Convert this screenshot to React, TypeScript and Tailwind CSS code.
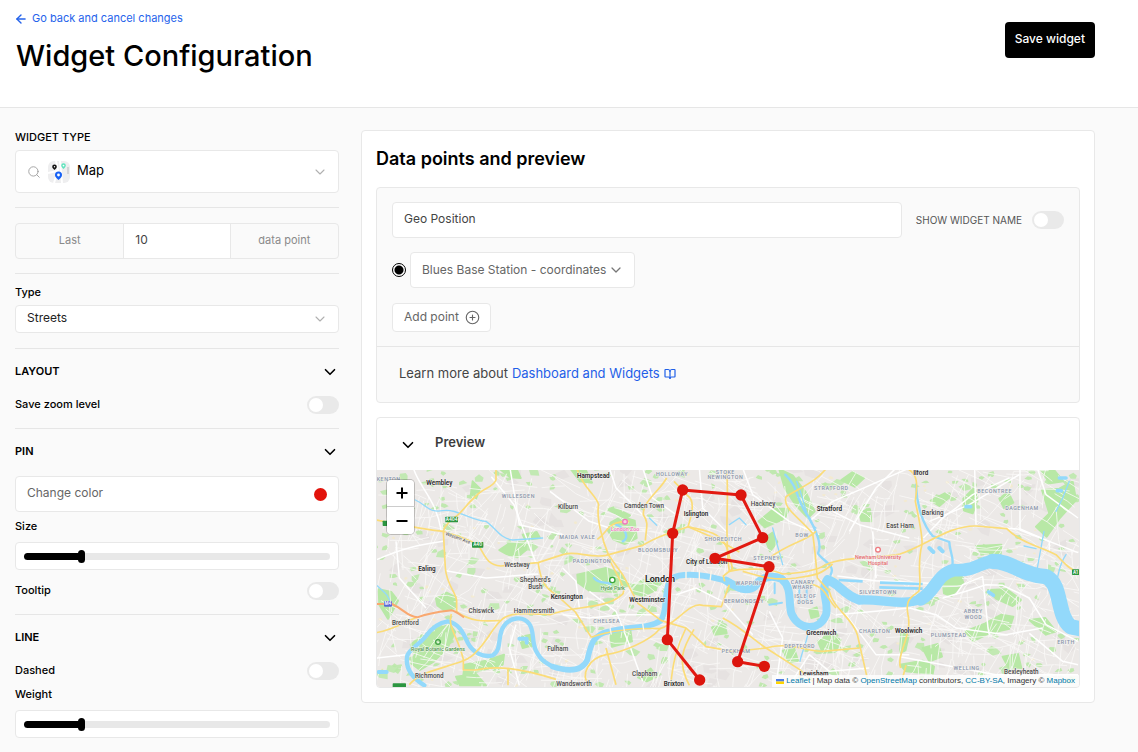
import { useId } from "react";
import type { ReactNode } from "react";
import { ArrowLeft, BookOpen, ChevronDown, CirclePlus, Search } from "lucide-react";

type Label = [x: number, y: number, text: string, kind: "town" | "minor" | "area" | "city" | "poi"];

const LABELS: Label[] = [
  [190, 52, "Wembley", "town"],
  [38, 38, "KENTON", "area"],
  [427, 91, "WILLESDEN", "area"],
  [153, 308, "Ealing", "town"],
  [423, 296, "Westway", "minor"],
  [478, 342, "Shepherd's", "minor"],
  [478, 362, "Bush", "minor"],
  [316, 435, "Chiswick", "minor"],
  [474, 436, "Hammersmith", "minor"],
  [88, 472, "Brentford", "minor"],
  [186, 550, "Royal Botanic Gardens", "poi"],
  [160, 630, "Richmond", "minor"],
  [652, 30, "Hampstead", "town"],
  [576, 122, "Kilburn", "minor"],
  [804, 120, "Camden Town", "minor"],
  [888, 24, "HOLLOWAY", "area"],
  [1048, 19, "STOKE", "area"],
  [1048, 34, "NEWINGTON", "area"],
  [960, 145, "Islington", "town"],
  [604, 212, "MAIDA VALE", "area"],
  [846, 252, "BLOOMSBURY", "area"],
  [648, 284, "PADDINGTON", "area"],
  [1042, 218, "SHOREDITCH", "area"],
  [992, 289, "City of London", "town"],
  [852, 342, "London", "city"],
  [710, 365, "Hyde Park", "poi"],
  [572, 393, "Kensington", "town"],
  [814, 403, "Westminster", "town"],
  [692, 464, "CHELSEA", "area"],
  [545, 548, "Fulham", "minor"],
  [806, 624, "Clapham", "minor"],
  [594, 653, "Wandsworth", "minor"],
  [894, 653, "Brixton", "town"],
  [1161, 114, "Hackney", "minor"],
  [1366, 66, "STRATFORD", "area"],
  [1360, 130, "Stratford", "town"],
  [1278, 207, "BOW", "area"],
  [1572, 179, "East Ham", "minor"],
  [1172, 277, "STEPNEY", "area"],
  [1120, 352, "WAPPING", "area"],
  [1280, 347, "CANARY", "area"],
  [1280, 364, "WHARF", "area"],
  [1288, 391, "ISLE OF", "area"],
  [1288, 409, "DOGS", "area"],
  [1104, 404, "BERMONDSEY", "area"],
  [1506, 377, "SILVERTOWN", "area"],
  [1496, 495, "CHARLTON", "area"],
  [1336, 500, "Greenwich", "town"],
  [1271, 539, "DEPTFORD", "area"],
  [1080, 554, "PECKHAM", "area"],
  [1314, 624, "Lewisham", "town"],
  [1598, 496, "Woolwich", "town"],
  [1634, 22, "Ilford", "town"],
  [1670, 141, "Barking", "minor"],
  [1856, 75, "BECONTREE", "area"],
  [1938, 125, "DAGENHAM", "area"],
  [1792, 436, "ABBEY", "area"],
  [1792, 454, "WOOD", "area"],
  [1718, 508, "PLUMSTEAD", "area"],
  [1772, 606, "WELLING", "area"],
  [1936, 617, "Bexleyheath", "minor"],
  [2070, 528, "ERITH", "area"],
];

const LABEL_CLASS = {
  town: "fill-[#2b2b2b] text-[19px] font-semibold",
  minor: "fill-[#4b4b4b] text-[19px] font-medium",
  area: "fill-[#8792a8] text-[16px] font-medium tracking-widest",
  city: "fill-[#1f1f1f] text-[27px] font-semibold",
  poi: "fill-[#4f9a4c] text-[16px] font-medium",
};

const PARKS = [
  "M290 40 L312 62 L300 92 L284 84 Z",
  "M368 0 L420 0 L434 30 L402 28 Z",
  "M370 246 L400 226 L452 222 L450 246 L424 268 L392 258 Z",
  "M440 200 L482 192 L492 210 L448 216 Z",
  "M180 392 L212 374 L240 388 L238 420 L206 428 L184 412 Z",
  "M8 364 L46 372 L66 398 L50 428 L36 452 L10 410 Z",
  "M126 534 L176 484 L222 470 L238 492 L214 540 L174 580 L132 606 L106 586 Z",
  "M104 530 L140 500 L150 512 L112 552 Z",
  "M266 590 L330 578 L384 560 L380 590 L320 606 L262 622 Z",
  "M240 626 L300 618 L330 652 L252 652 Z",
  "M430 508 L464 500 L470 532 L440 540 Z",
  "M604 320 L690 300 L734 318 L758 350 L720 372 L640 368 L606 344 Z",
  "M704 164 L736 146 L776 158 L782 210 L746 228 L712 214 L696 188 Z",
  "M700 490 L762 480 L768 520 L708 536 Z",
  "M768 352 L800 338 L846 334 L840 366 L800 384 L774 376 Z",
  "M582 0 L626 0 L648 44 L612 40 Z",
  "M694 124 L712 118 L762 142 L748 152 Z",
  "M786 628 L824 602 L842 626 L812 640 Z",
  "M1008 478 L1046 470 L1052 496 L1016 500 Z",
  "M1210 4 L1250 22 L1290 74 L1316 130 L1296 150 L1258 110 L1226 60 Z",
  "M1148 160 L1194 122 L1240 122 L1226 152 L1166 178 Z",
  "M1166 210 L1190 194 L1204 222 L1182 250 Z",
  "M1300 426 L1322 418 L1328 444 L1306 450 Z",
  "M1326 520 L1360 500 L1394 516 L1378 552 L1340 554 Z",
  "M1220 548 L1254 540 L1266 578 L1240 584 Z",
  "M1396 36 L1430 12 L1464 30 L1436 56 Z",
  "M1450 132 L1482 124 L1486 160 L1456 158 Z",
  "M1762 92 L1796 58 L1804 100 L1790 136 L1764 128 Z",
  "M1664 98 L1706 76 L1722 86 L1690 114 Z",
  "M1870 92 L1896 72 L1912 104 L1884 120 Z",
  "M1990 0 L2034 6 L2062 40 L2022 46 Z",
  "M1998 66 L2050 62 L2090 40 L2100 96 L2050 152 L2012 206 L1980 176 L2020 136 Z",
  "M1700 340 L1752 318 L1762 344 L1726 384 L1704 376 Z",
  "M1836 366 L1892 364 L1936 396 L1910 414 L1860 392 Z",
  "M1800 234 L1876 230 L1874 258 L1816 256 Z",
  "M1768 490 L1828 466 L1876 440 L1912 446 L1900 482 L1840 496 L1790 520 Z",
  "M1960 456 L2008 450 L2040 490 L2010 500 Z",
  "M1640 540 L1686 528 L1698 566 L1660 580 Z",
  "M1576 488 L1598 504 L1588 548 L1572 554 Z",
  "M1572 590 L1640 578 L1674 596 L1670 618 L1590 610 Z",
  "M1880 566 L1926 558 L1936 600 L1896 596 Z",
];

const ROADS = [
  "M360 0 V36 C350 60 320 60 300 84 C270 110 260 130 244 142 C220 160 206 172 202 190 L208 300 C212 350 238 370 242 398 V432",
  "M0 156 C60 166 110 180 202 190 C240 204 288 214 310 236 C330 270 336 290 374 294 L486 284 L560 260 C600 246 640 272 690 262 L800 232 C860 196 900 190 936 176",
  "M486 284 C494 330 500 356 540 380 L598 432 L646 508",
  "M242 432 C300 470 346 456 374 458 C400 430 450 436 522 440 C600 412 690 424 738 380 C756 366 720 320 698 270",
  "M0 494 C50 486 84 462 124 448",
  "M226 438 C214 480 244 500 262 574 V606 H300 C360 592 430 600 540 634",
  "M100 650 C150 592 262 600 300 552 C330 524 350 480 374 458",
  "M396 600 V652",
  "M602 0 C620 60 660 80 668 110 C660 150 680 220 698 262 L740 320 L786 406 L856 458 L930 480 L990 536 L1070 550",
  "M664 214 C700 190 690 160 760 160",
  "M872 30 C850 70 800 100 802 140 C820 166 810 180 808 218",
  "M894 40 L936 84 C960 100 944 150 936 176 L1020 212 L1090 252",
  "M936 176 C990 190 1040 190 1056 250 L1070 302 L1042 324 L1046 340",
  "M646 508 C700 486 790 480 852 482 C820 520 740 552 690 560 C640 570 610 620 640 652",
  "M690 540 L720 650",
  "M930 480 C900 540 890 590 884 652",
  "M954 484 C920 540 902 580 940 652",
  "M852 482 C900 470 940 400 980 412 L1036 416 L1060 350",
  "M1052 6 C1060 100 1044 200 1060 310 C1100 300 1180 300 1220 318 C1260 316 1320 310 1350 290 C1400 266 1500 272 1572 258 C1650 232 1720 172 1800 174 L1892 182 C1930 220 1980 232 2040 260 C2060 280 2080 306 2106 312",
  "M1100 310 C1140 320 1180 340 1260 330 C1320 320 1330 322 1370 288",
  "M1180 270 C1240 224 1290 220 1320 190",
  "M1352 0 C1320 40 1290 50 1230 86 C1220 120 1260 140 1310 196 C1316 240 1320 280 1324 330 L1360 370 C1370 420 1430 450 1444 500 L1476 640",
  "M1290 346 C1350 350 1350 390 1380 420",
  "M1040 450 C1100 480 1150 530 1170 540 C1240 520 1290 550 1340 550 L1450 540",
  "M1060 552 L1170 540 L1270 604 L1310 640",
  "M1590 0 C1632 18 1622 60 1618 100 C1630 160 1640 200 1638 230 C1620 300 1640 340 1628 370 C1600 390 1588 400 1596 440 C1610 500 1560 560 1574 600",
  "M1590 592 L1574 652",
];

const MAJOR_STREETS = [
  "M112 0 C130 60 180 90 196 190",
  "M0 276 C80 240 130 230 202 220",
  "M210 308 L330 330 L486 318",
  "M346 26 L414 110 L480 286",
  "M402 0 L430 170 L560 200",
  "M0 570 L90 560",
  "M60 220 L70 330 L150 420",
  "M522 70 L640 160 L700 180",
  "M700 0 L720 60 L800 140",
  "M800 0 L830 90 L900 140",
  "M970 0 L980 120 L1050 190",
  "M560 440 L640 450 L740 440 L850 440",
  "M900 380 L960 360 L1040 400 L1130 500",
  "M1100 0 L1130 80 L1240 160 L1330 200",
  "M1300 160 L1370 100 L1440 70 L1600 0",
  "M1370 130 L1450 170 L1600 210",
  "M1420 190 L1500 60 L1560 0",
  "M1490 190 L1500 330",
  "M1384 324 L1500 338 L1660 346",
  "M1642 210 L1700 150 L1740 120 L1790 80 L1900 30",
  "M1660 160 L1780 110 L1930 20",
  "M1932 0 V186 L2106 254",
  "M1984 0 L2010 80 L2106 150",
  "M1796 0 L1800 170",
  "M1876 180 L1936 184 L2020 220 L2020 250",
  "M1700 390 L1770 370 L1830 350 L1880 352 L1960 390 L2010 470 L2106 520",
  "M1740 380 L1760 350 L1820 326 L1836 480 L1840 500",
  "M1600 420 L1680 440 L1740 480 L1890 500 L2000 480",
  "M1572 566 L1700 590 L1860 620 L2106 620",
  "M1960 496 L2060 580 L2106 590",
  "M1380 440 L1500 430 L1600 420",
  "M1410 440 L1500 560 L1600 560",
  "M1180 430 L1220 510 L1200 652",
  "M1240 652 L1300 560 L1360 610 L1480 600",
  "M560 300 L600 340 L610 420",
  "M640 370 L720 430 L760 530 L800 640",
  "M420 470 L400 540 L430 652",
];

const MARKERS = [
  [971, 636],
  [874, 515],
  [890, 196],
  [920, 66],
  [1095, 81],
  [1160, 209],
  [1017, 271],
  [1179, 296],
  [1085, 581],
  [1165, 595],
];

function createRandom(seed: number) {
  let s = seed;
  return () => {
    s = (s * 16807) % 2147483647;
    return s / 2147483647;
  };
}

const random = createRandom(4711);

const STREETS = Array.from({ length: 900 }, () => {
  const x = random() * 2110;
  const y = random() * 655;
  const a = (random() < 0.5 ? 0.35 : 1.9) + (random() - 0.5) * 0.9;
  const l = 24 + random() * 80;
  const b = a + (random() - 0.5) * 0.7;
  const x2 = x + Math.cos(a) * l;
  const y2 = y + Math.sin(a) * l;
  return `M${x.toFixed(0)} ${y.toFixed(0)}L${x2.toFixed(0)} ${y2.toFixed(0)}L${(x2 + Math.cos(b) * l * 0.6).toFixed(0)} ${(y2 + Math.sin(b) * l * 0.6).toFixed(0)}`;
}).join("");

function patches(count: number, size: number) {
  return Array.from({ length: count }, () => {
    const x = random() * 2110;
    const y = random() * 655;
    const sides = 5;
    const tilt = random() * 6;
    const points = Array.from({ length: sides }, (_, i) => {
      const r = size * (0.4 + random() * 0.9);
      const t = tilt + (i / sides) * Math.PI * 2;
      return `${(x + Math.cos(t) * r * 1.2).toFixed(0)} ${(y + Math.sin(t) * r * 0.8).toFixed(0)}`;
    });
    return `M${points.join("L")}Z`;
  }).join("");
}

const SMALL_GREENS = patches(330, 10);
const MEDIUM_GREENS = patches(70, 17);
const BUILT_UP = patches(130, 22);
const YELLOW_BLOCKS = patches(90, 6);

function CityMap() {
  return (
    <svg viewBox="3 6 2106 651" className="block w-full" role="img" aria-label="Map of London">
      <rect x="0" y="0" width="2112" height="660" fill="#ece9e7" />
      <path d={BUILT_UP} fill="#e6e2e1" />
      <path d={YELLOW_BLOCKS} fill="#f3ead0" />
      <g fill="#b8e8a6">
        <path d={SMALL_GREENS} opacity="0.85" />
        <path d={MEDIUM_GREENS} opacity="0.8" />
        {PARKS.map((d) => (
          <path key={d} d={d} stroke="#b8e8a6" strokeWidth="6" strokeLinejoin="round" />
        ))}
      </g>
      <path d={STREETS} fill="none" stroke="#faf9f8" strokeWidth="2.4" />
      <g fill="none" stroke="#ffffff" strokeWidth="4.5" strokeLinejoin="round">
        {MAJOR_STREETS.map((d) => (
          <path key={d} d={d} />
        ))}
      </g>
      <g fill="none" stroke="#93d9fb" strokeLinecap="round" strokeLinejoin="round">
        <g strokeWidth="4">
          <path d="M118 96 C150 110 160 136 200 128 C240 120 290 160 330 160 C360 180 370 210 410 216 L500 210" />
          <path d="M0 350 C20 370 40 380 44 410" />
          <path d="M720 170 C750 180 760 210 740 220" strokeWidth="7" />
          <path d="M654 330 C670 350 690 340 704 348" strokeWidth="7" />
          <path d="M820 150 L842 172 M1060 170 L1090 150 L1110 170 M1190 180 L1220 290" />
          <path d="M1228 20 C1270 60 1260 100 1300 150 C1320 190 1340 230 1326 256 C1340 280 1380 290 1364 320" strokeWidth="7" />
          <path d="M1262 40 C1290 110 1290 160 1320 180" />
          <path d="M1620 50 C1622 110 1640 170 1670 204 L1720 222 C1720 250 1736 270 1728 296" strokeWidth="7" />
          <path d="M1944 234 L1980 242 M2080 40 L2060 90 L2040 130 M2004 190 L1984 300 M2070 260 C2050 290 2050 310 2044 330" />
          <path d="M1272 580 C1280 540 1300 510 1296 480" />
        </g>
        <path
          d="M145 652 C110 630 86 600 94 562 C104 540 130 530 150 504 C170 476 190 464 215 460 C250 466 262 496 276 526 C290 552 320 570 350 562 C380 545 362 500 384 474 C400 450 440 440 460 468 C476 490 466 520 480 548 C496 580 516 590 540 600"
          strokeWidth="13"
        />
        <path
          d="M530 596 C580 612 618 610 634 576 C644 530 650 500 700 490 C760 474 820 482 854 458 C876 430 862 360 884 332 C920 312 990 320 1062 342"
          strokeWidth="17"
        />
        <path
          d="M1050 338 C1080 356 1110 376 1138 354 C1156 324 1190 322 1216 332 C1250 360 1236 400 1246 436 C1270 490 1330 490 1350 440 C1360 400 1330 370 1354 334"
          strokeWidth="24"
        />
        <path d="M1356 336 C1390 346 1400 380 1450 396 C1520 392 1580 416 1640 392" strokeWidth="28" />
        <path d="M1634 394 C1680 370 1680 320 1734 306 C1800 312 1820 274 1870 278" strokeWidth="38" />
        <path d="M1850 280 C1910 280 1930 320 2010 326 C2060 350 2040 440 2084 476 L2130 486" strokeWidth="46" />
        <path d="M1388 336 L1460 340 M1512 344 L1640 348 M1510 358 L1640 362" strokeWidth="8" strokeLinecap="butt" />
        <path d="M1180 410 L1218 404 M1270 340 V400 M1292 344 V400 M1196 346 V376" strokeWidth="6" />
        <path d="M1660 240 L1672 252 M1690 240 L1700 250 M430 512 H452 V524 M8 612 H32" strokeWidth="12" />
        <path d="M2050 30 H2070 M2044 68 H2056 M1770 116 H1784 M1838 372 L1852 382" strokeWidth="11" />
      </g>
      <g fill="none" stroke="#fbdc78" strokeWidth="5" strokeLinejoin="round">
        {ROADS.map((d) => (
          <path key={d} d={d} />
        ))}
      </g>
      <path
        d="M0 408 H48 C84 424 94 446 124 448 C160 434 200 430 226 427 C240 430 252 440 264 448"
        fill="none"
        stroke="#f9a870"
        strokeWidth="6"
      />
      <g stroke="#fbf6ea" strokeWidth="4">
        <path d="M930 310 V334 M970 306 V334 M1006 308 L1002 340 M702 480 L706 500 M742 472 L746 494 M800 466 L804 492" />
      </g>
      <g fill="#2c9641">
        <rect x="208" y="146" width="38" height="17" rx="2" />
        <rect x="288" y="222" width="34" height="17" rx="2" />
        <rect x="20" y="158" width="24" height="16" rx="2" />
        <rect x="50" y="646" width="40" height="16" rx="2" />
        <rect x="2088" y="304" width="26" height="17" rx="2" />
      </g>
      <rect x="24" y="399" width="24" height="17" rx="3" fill="#5b69d6" />
      <g className="fill-white text-[13px] font-semibold" textAnchor="middle">
        <text x="227" y="159">A404</text>
        <text x="305" y="235">A40</text>
        <text x="36" y="412">M4</text>
        <text x="2098" y="317">A1</text>
      </g>
      <g fill="none" strokeWidth="4">
        <circle cx="186" cy="522" r="7" stroke="#43a047" />
        <circle cx="709" cy="336" r="8" stroke="#3aa63a" fill="#fff" />
        <circle cx="747" cy="161" r="7" stroke="#f078bb" fill="#fbd0e7" />
        <circle cx="1506" cy="245" r="7" stroke="#ee7a80" fill="#fff" />
      </g>
      <g
        className="font-['Roboto','Noto_Sans',sans-serif]"
        textAnchor="middle"
        stroke="#f4f2f0"
        strokeWidth="3"
        strokeLinejoin="round"
        paintOrder="stroke"
      >
        {LABELS.map(([x, y, text, kind]) => (
          <text key={text} x={x} y={y} className={LABEL_CLASS[kind]}>
            {text}
          </text>
        ))}
        <text transform="translate(244 214) rotate(20)" className="fill-[#4b4b4b] text-[14px]">
          Western Ave
        </text>
        <text x="747" y="189" className="fill-[#f078bb] text-[16px] font-medium">
          London Zoo
        </text>
        <g className="fill-[#e5696f] text-[16px] font-medium">
          <text x="1506" y="272">Newham University</text>
          <text x="1506" y="291">Hospital</text>
        </g>
      </g>
      <polyline
        points={MARKERS.map((p) => p.join(",")).join(" ")}
        fill="none"
        stroke="#e21a12"
        strokeWidth="9"
        strokeLinejoin="round"
      />
      {MARKERS.map(([x, y]) => (
        <circle key={`${x}-${y}`} cx={x} cy={y} r="17" fill="#dc150d" />
      ))}
    </svg>
  );
}

function MapThumb() {
  return (
    <svg viewBox="0 0 22 22" className="size-[22px]" aria-hidden="true">
      <rect width="22" height="22" rx="6" fill="#eeeeef" />
      <path d="M8 0 L10 9 L6 22 M12 0 L14 22 M0 12 L9 10" stroke="#fff" strokeWidth="2" fill="none" />
      <path d="M19 6 h2 v7 h-2 z" fill="#d4d4d6" />
      <path d="M6.500 9 C5 7.500 4.200 6.700 4.200 5.700 A2.300 2.300 0 0 1 8.800 5.700 C8.800 6.700 8 7.500 6.500 9 Z" fill="#111" />
      <circle cx="6.500" cy="5.700" r="0.700" fill="#fff" />
      <path d="M15.500 8 C14 6.500 13.200 5.700 13.200 4.600 A2.300 2.300 0 0 1 17.800 4.600 C17.800 5.700 17 6.500 15.500 8 Z" fill="#5fe3bd" />
      <circle cx="15.500" cy="4.600" r="0.900" fill="#fff" />
      <path d="M10.500 19 C8 16.800 7 15.700 7 14 A3.500 3.500 0 0 1 14 14 C14 15.700 13 16.800 10.500 19 Z" fill="#1560f5" />
      <circle cx="10.500" cy="14" r="1.400" fill="#fff" />
    </svg>
  );
}

function Toggle({ id }: { id: string }) {
  return (
    <input
      id={id}
      type="checkbox"
      role="switch"
      className="relative block h-[18px] w-8 shrink-0 appearance-none rounded-full bg-[#e9e9e9] before:absolute before:top-0.5 before:left-0.5 before:size-3.5 before:rounded-full before:bg-white checked:bg-black checked:before:left-4"
    />
  );
}

function ToggleRow({ label }: { label: string }) {
  const id = useId();
  return (
    <div className="flex h-[18px] items-center justify-between">
      <label htmlFor={id} className="pb-0.5 text-[11px] leading-[14px] font-medium">
        {label}
      </label>
      <Toggle id={id} />
    </div>
  );
}

function SliderField({ label }: { label: string }) {
  const id = useId();
  return (
    <div className="mt-[7px]">
      <label htmlFor={id} className="block text-[11px] leading-[14px] font-medium">
        {label}
      </label>
      <div className="mt-[9px] flex h-7 items-center rounded border border-[#e8e8e8] bg-white px-2">
        <input
          id={id}
          type="range"
          min={0}
          max={100}
          defaultValue={18}
          className="h-[7px] w-full appearance-none rounded-full bg-[linear-gradient(to_right,#000_19%,#e8e8e8_19%)] [&::-webkit-slider-thumb]:h-[13px] [&::-webkit-slider-thumb]:w-[7px] [&::-webkit-slider-thumb]:appearance-none [&::-webkit-slider-thumb]:rounded-full [&::-webkit-slider-thumb]:bg-black"
        />
      </div>
    </div>
  );
}

function Group({ title, children }: { title: string; children: ReactNode }) {
  return (
    <section className="border-t border-[#e6e6e6] pt-3 pb-3.5">
      <button type="button" className="mb-[15px] flex h-5 w-full items-center justify-between">
        <span className="text-[11px] font-semibold">{title}</span>
        <ChevronDown size={18} strokeWidth={2.2} className="mt-0.5 text-black" />
      </button>
      {children}
    </section>
  );
}

export default function App() {
  return (
    <div className="min-h-screen bg-[#fafafa] font-['Inter',sans-serif] text-black">
      <header className="flex h-[108px] items-start justify-between border-b border-[#e6e6e6] bg-white pr-[43px] pl-4">
        <div>
          <a href="#dashboard" className="mt-2.5 flex items-center gap-1 text-[11px] leading-[14px] text-[#2563eb]">
            <ArrowLeft size={14} strokeWidth={2.4} className="-ml-0.5 mt-0.5" />
            Go back and cancel changes
          </a>
          <h1 className="mt-2.5 text-[29px] leading-10 font-medium">Widget Configuration</h1>
        </div>
        <button type="button" className="mt-[22px] h-9 rounded bg-black px-2.5 pb-0.5 text-[12px] font-medium text-white">
          Save widget
        </button>
      </header>

      <div className="flex items-start gap-[22px] pt-[22px] pr-[43px] pb-3 pl-[15px]">
        <aside className="w-[324px] shrink-0">
          <label htmlFor="widget-type" className="block text-[11px] leading-[14px] font-medium">
            WIDGET TYPE
          </label>
          <div className="relative mt-1.5 mb-3.5">
            <select
              id="widget-type"
              className="block h-[43px] w-full appearance-none rounded border border-[#e8e8e8] bg-white pb-0.5 pl-[61px] text-[13px]"
            >
              <option>Map</option>
            </select>
            <span className="pointer-events-none absolute inset-y-0 left-3 flex items-center gap-[7px]">
              <Search size={14} strokeWidth={1.5} className="text-[#9a9a9a]" />
              <MapThumb />
            </span>
            <span className="pointer-events-none absolute inset-y-0 right-[11px] flex items-center">
              <ChevronDown size={16} strokeWidth={1.6} className="text-[#b0b0b0]" />
            </span>
          </div>

          <section className="border-t border-[#e6e6e6] pt-[15px] pb-3.5">
            <label className="grid h-9 grid-cols-3 overflow-hidden rounded border border-[#e8e8e8] text-center text-[11px] leading-8 text-[#8a8a8a]">
              <span>Last</span>
              <input
                type="text"
                defaultValue="10"
                className="min-w-0 border-x border-[#e8e8e8] bg-white px-[11px] pb-0.5 text-[12px] text-[#444]"
              />
              <span>data point</span>
            </label>
          </section>

          <section className="border-t border-[#e6e6e6] pt-[11px] pb-[15px]">
            <label htmlFor="map-style" className="block text-[11px] leading-[14px] font-medium">
              Type
            </label>
            <div className="relative mt-1.5">
              <select
                id="map-style"
                className="block h-7 w-full appearance-none rounded border border-[#e8e8e8] bg-white pb-0.5 pl-[11px] text-[12px] text-[#222]"
              >
                <option>Streets</option>
              </select>
              <span className="pointer-events-none absolute inset-y-0 right-[11px] flex items-center">
                <ChevronDown size={16} strokeWidth={1.6} className="text-[#b0b0b0]" />
              </span>
            </div>
          </section>

          <Group title="LAYOUT">
            <ToggleRow label="Save zoom level" />
          </Group>

          <Group title="PIN">
            <button
              type="button"
              className="flex h-9 w-full items-center justify-between rounded border border-[#e8e8e8] bg-white px-[11px] text-[12px] text-[#666]"
            >
              <span className="pb-0.5">Change color</span>
              <span className="size-[13px] rounded-full bg-[#e2130b]" />
            </button>
            <SliderField label="Size" />
            <div className="mt-3">
              <ToggleRow label="Tooltip" />
            </div>
          </Group>

          <Group title="LINE">
            <ToggleRow label="Dashed" />
            <SliderField label="Weight" />
          </Group>
        </aside>

        <main className="min-w-0 flex-1 rounded border border-[#e8e8e8] bg-white p-3.5">
          <h2 className="mt-0.5 text-[18px] leading-6 font-semibold">Data points and preview</h2>

          <section className="mt-4 rounded border border-[#e8e8e8] bg-[#fafafa]">
            <div className="px-[15px] py-3.5">
              <div className="flex items-center gap-3.5">
                <input
                  type="text"
                  aria-label="Widget name"
                  defaultValue="Geo Position"
                  className="h-9 min-w-0 flex-1 rounded border border-[#e8e8e8] bg-white px-[11px] pb-1 text-[12px] text-[#444]"
                />
                <label htmlFor="show-name" className="flex items-center gap-2.5 text-[10px] text-[#555]">
                  SHOW WIDGET NAME
                  <Toggle id="show-name" />
                </label>
              </div>

              <div className="mt-3.5 flex items-center gap-1">
                <input
                  type="radio"
                  name="point"
                  aria-label="Blues Base Station - coordinates"
                  defaultChecked
                  className="size-3.5 appearance-none rounded-full border border-black bg-white bg-[radial-gradient(circle,#000_0_4px,transparent_5px)]"
                />
                <div className="relative">
                  <select
                    aria-label="Data point"
                    className="block h-9 w-[225px] appearance-none rounded border border-[#e8e8e8] bg-white pl-[11px] text-[12px] text-[#666]"
                  >
                    <option>Blues Base Station - coordinates</option>
                  </select>
                  <span className="pointer-events-none absolute inset-y-0 right-[11px] flex items-center">
                    <ChevronDown size={16} strokeWidth={1.9} className="text-[#777]" />
                  </span>
                </div>
              </div>

              <button
                type="button"
                className="mt-[15px] flex h-[29px] items-center gap-1.5 rounded border border-[#e8e8e8] bg-white pr-2.5 pl-[11px] text-[12px] text-[#666]"
              >
                <span className="pb-0.5">Add point</span>
                <CirclePlus size={15} strokeWidth={1.8} />
              </button>
            </div>
            <p className="flex h-14 items-center gap-1 border-t border-[#e6e6e6] px-[22px] pb-0.5 text-[13px] text-[#444]">
              Learn more about
              <a href="#docs" className="flex items-center gap-1 text-[#1f5fe8]">
                Dashboard and Widgets
                <BookOpen size={12} strokeWidth={2.4} />
              </a>
            </p>
          </section>

          <section className="mt-3.5 overflow-hidden rounded border border-[#e8e8e8]">
            <h3>
              <button type="button" className="flex h-[52px] w-full items-center gap-[18px] px-[22px] text-[13px] font-semibold text-[#3c3c3c]">
                <ChevronDown size={18} strokeWidth={2.2} className="mt-0.5 text-black" />
                <span className="pb-0.5">Preview</span>
              </button>
            </h3>
            <div className="relative">
              <CityMap />
              <div className="absolute top-2.5 left-2.5 flex flex-col overflow-hidden rounded-sm shadow-[0_0_0_1px_rgba(0,0,0,0.2)]">
                <button type="button" aria-label="Zoom in" className="grid h-[27px] w-[27px] place-items-center border-b border-[#ccc] bg-white">
                  <svg viewBox="0 0 12 12" className="ml-0.5 size-3" aria-hidden="true">
                    <path d="M6 0.500 V11.500 M0.500 6 H11.500" stroke="#000" strokeWidth="2" />
                  </svg>
                </button>
                <button type="button" aria-label="Zoom out" className="grid h-[27px] w-[27px] place-items-center bg-white">
                  <svg viewBox="0 0 12 12" className="ml-0.5 size-3" aria-hidden="true">
                    <path d="M0.500 6 H11.500" stroke="#000" strokeWidth="2" />
                  </svg>
                </button>
              </div>
              <p className="absolute right-0 bottom-0 flex items-center bg-white/80 px-1 font-['Liberation_Sans',sans-serif] text-[8px] leading-3 whitespace-pre text-[#333]">
                <svg viewBox="0 0 8 5" className="mr-0.5 h-[5px] w-2" aria-hidden="true">
                  <rect width="8" height="2.500" fill="#4c7be1" />
                  <rect y="2.500" width="8" height="2.500" fill="#ffd500" />
                </svg>
                <a href="#leaflet" className="text-[#0078a8]">Leaflet</a>
                <span> | Map data © </span>
                <a href="#osm" className="text-[#0078a8]">OpenStreetMap</a>
                <span> contributors, </span>
                <a href="#license" className="text-[#0078a8]">CC-BY-SA</a>
                <span>, Imagery © </span>
                <a href="#mapbox" className="text-[#0078a8]">Mapbox</a>
              </p>
            </div>
          </section>
        </main>
      </div>
    </div>
  );
}
